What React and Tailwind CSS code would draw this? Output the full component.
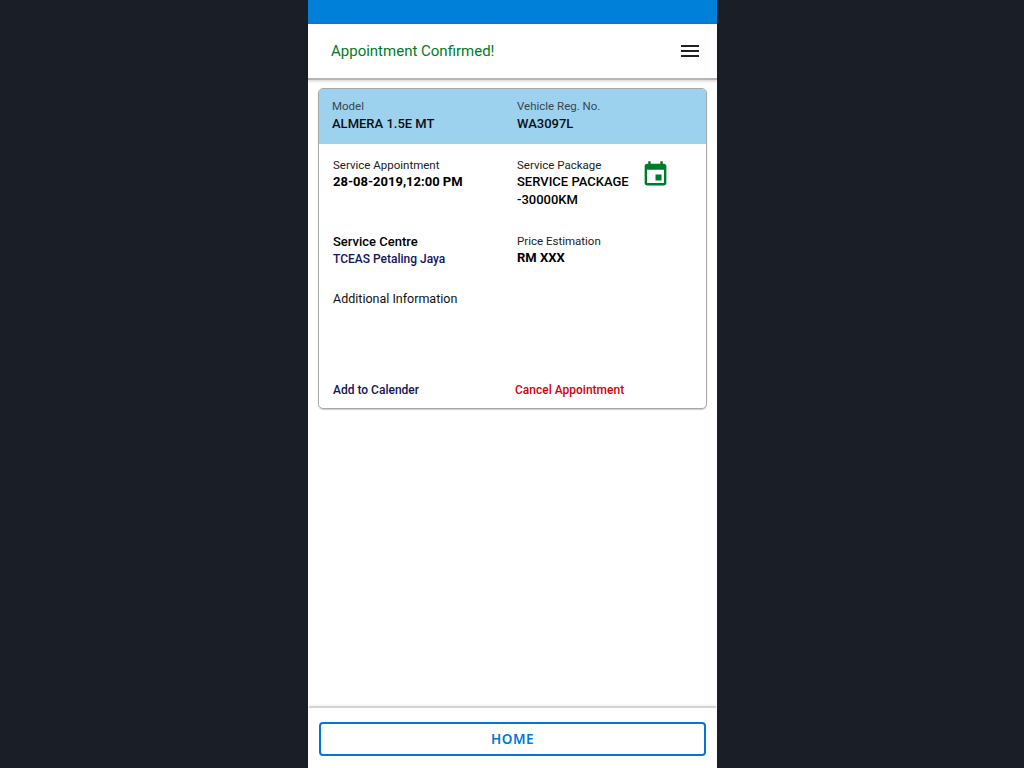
import React from 'react';

function MenuIcon() {
    return (
        <svg width="24" height="24" viewBox="0 0 24 24" fill="#212121">
            <path d="M3 18h18v-2H3v2zm0-5h18v-2H3v2zm0-7v2h18V6H3z" />
        </svg>
    );
}

function EventIcon() {
    return (
        <svg className="mt-[3px]" width="29" height="29" viewBox="0 0 24 24" fill="#007a28">
            <path d="M17 12h-5v5h5v-5zM16 1v2H8V1H6v2H5c-1.11 0-1.99.9-1.99 2L3 19c0 1.1.89 2 2 2h14c1.1 0 2-.9 2-2V5c0-1.1-.9-2-2-2h-1V1h-2zm3 18H5V8h14v11z" />
        </svg>
    );
}

export default function App() {
    return (
        <div className="flex justify-center h-[768px] overflow-hidden bg-[#1a1e26] font-['Roboto',sans-serif]">
            <div className="flex flex-col w-[409px] h-full ml-[1px] bg-white">
                <div className="h-6 shrink-0 bg-[#0080d8]" />

                <header className="flex items-center justify-between h-[56px] shrink-0 pl-[23px] pr-[15px] border-b-2 border-[#b4b4b4] shadow-[0_1px_3px_rgba(0,0,0,0.2)]">
                    <h1 className="text-[15px] font-normal text-[#007a28]">Appointment Confirmed!</h1>
                    <MenuIcon />
                </header>

                <main className="flex-1 px-[10px] pt-[8px]">
                    <div className="h-[321px] flex flex-col rounded-[5px] border border-[#a8a8a8] shadow-[0_1px_1px_rgba(0,0,0,0.2)] overflow-hidden">
                        <div className="grid grid-cols-[185px_1fr] h-[56px] shrink-0 -mx-px -mt-px px-[14px] pt-[10px] bg-[#9dd2ef]">
                            <div>
                                <p className="text-[11.5px] leading-[17px] text-[#37474f]">Model</p>
                                <p className="text-[13px] leading-[18px] font-medium text-[#0a0d12]">ALMERA 1.5E MT</p>
                            </div>
                            <div>
                                <p className="text-[11.5px] leading-[17px] text-[#37474f]">Vehicle Reg. No.</p>
                                <p className="text-[13px] leading-[18px] font-medium text-[#0a0d12]">WA3097L</p>
                            </div>
                        </div>

                        <div className="flex flex-col flex-1 pl-[14px] pt-[13px] pb-[10px]">
                            <div className="grid grid-cols-[184px_1fr] h-[76px]">
                                <div>
                                    <p className="text-[11.5px] leading-4 text-[#222]">Service Appointment</p>
                                    <p className="text-[13px] leading-[18px] font-bold text-black">28-08-2019,12:00 PM</p>
                                </div>
                                <div className="flex items-start">
                                    <div className="w-[124px]">
                                        <p className="text-[11.5px] leading-4 text-[#222]">Service Package</p>
                                        <p className="text-[13px] leading-[18px] font-medium text-black">SERVICE PACKAGE -30000KM</p>
                                    </div>
                                    <EventIcon />
                                </div>
                            </div>

                            <div className="grid grid-cols-[184px_1fr] h-[57px]">
                                <div>
                                    <p className="text-[13px] leading-[18px] font-medium text-black">Service Centre</p>
                                    <p className="text-xs leading-4 font-medium text-[#14145a]">TCEAS Petaling Jaya</p>
                                </div>
                                <div>
                                    <p className="text-[11.5px] leading-4 text-[#222]">Price Estimation</p>
                                    <p className="text-[13px] leading-[18px] font-bold text-black">RM XXX</p>
                                </div>
                            </div>

                            <p className="text-[12.5px] leading-[18px] text-[#111]">Additional Information</p>

                            <div className="grid grid-cols-[182px_1fr] mt-auto">
                                <a className="text-xs leading-4 font-medium text-[#14145a]">Add to Calender</a>
                                <a className="text-xs leading-4 font-medium text-[#d8000c]">Cancel Appointment</a>
                            </div>
                        </div>
                    </div>
                </main>

                <footer className="h-[62px] shrink-0 mx-px px-[10px] pt-[14px] border-t-2 border-[#d4d4d4] shadow-[0_-1px_2px_rgba(0,0,0,0.06)]">
                    <button className="w-full h-[34px] rounded-[4px] border-2 border-[#0078d4] text-[13.5px] leading-[26px] font-semibold tracking-[0.5px] text-[#0078d4] font-['Noto_Sans',sans-serif]">
                        HOME
                    </button>
                </footer>
            </div>
        </div>
    );
}
